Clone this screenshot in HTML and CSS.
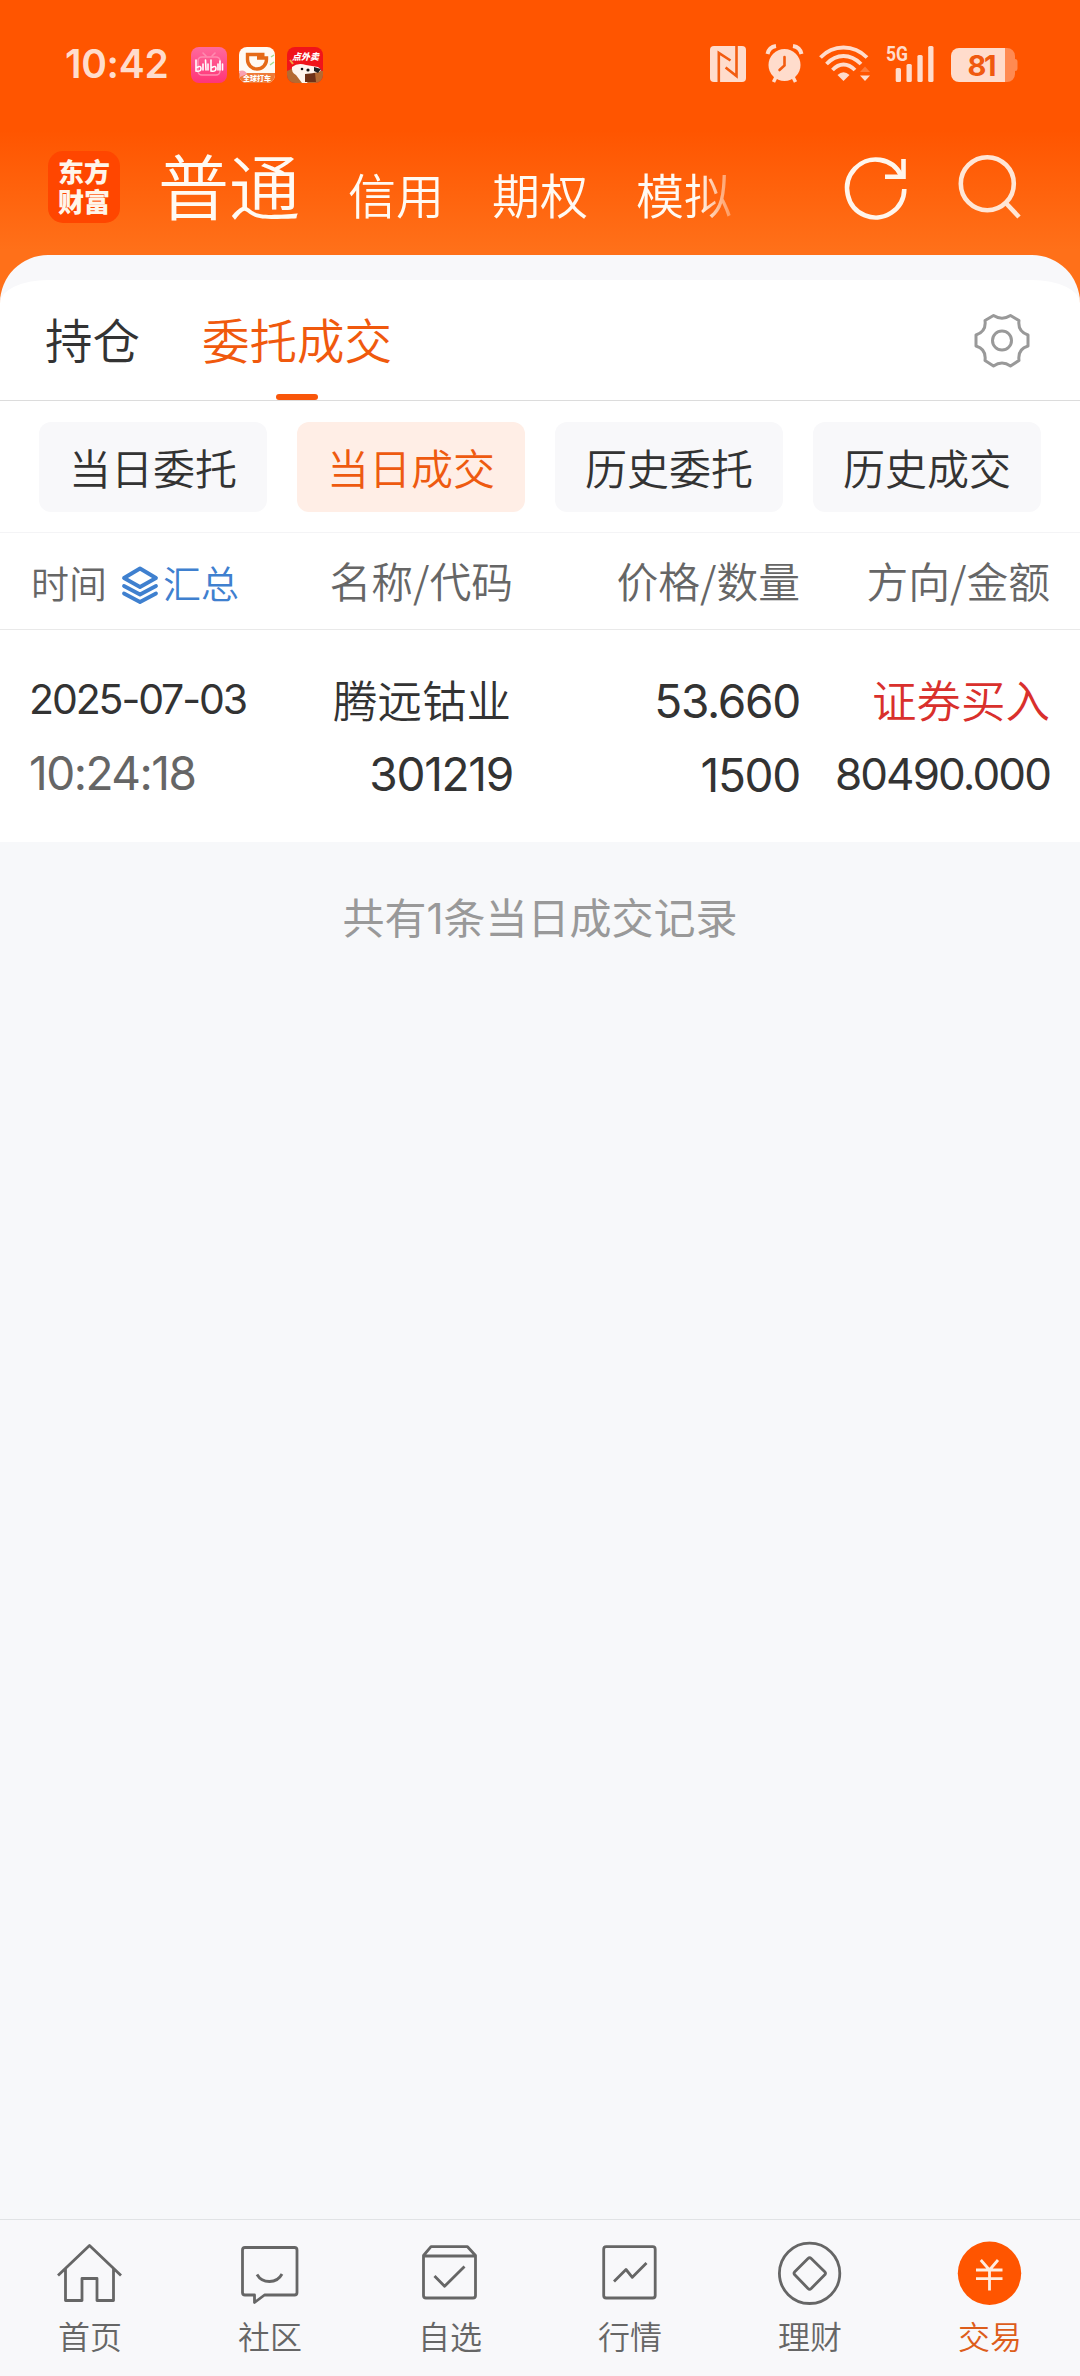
FILE: index.html
```html
<!DOCTYPE html>
<html lang="zh-CN">
<head>
    <meta charset="UTF-8">
    <meta name="viewport" content="width=device-width, initial-scale=1.0">
    <title>委托成交</title>
    <link rel="stylesheet" href="styles.css">
</head>
<body>
    <header class="header">
        <div class="status-bar">
            <span class="clock">10:42</span>
            <div class="app-icons">
                <svg width="36" height="36" viewBox="0 0 36 36">
                    <defs>
                        <linearGradient id="pink" x1="0" y1="0" x2="0" y2="1">
                            <stop offset="0" stop-color="#ff6a9c"/>
                            <stop offset="1" stop-color="#ff3478"/>
                        </linearGradient>
                    </defs>
                    <rect width="36" height="36" rx="8" fill="url(#pink)"/>
                    <g fill="none" stroke="#ff8bb0" stroke-width="1.6" stroke-linecap="round">
                        <rect x="7" y="10" width="22" height="18" rx="4"/>
                        <path d="M12 6l3 3M24 6l-3 3"/>
                    </g>
                    <g fill="none" stroke="#fff" stroke-width="1.6" stroke-linecap="round">
                        <path d="M5 13v11q5 1 5-2.500t-4-1M12 17v6M14.500 13l.5 10M17 17v6M20 13v11q5 1 5-2.500t-4-1M27 17v6M29 14v9M31.500 17v6"/>
                    </g>
                </svg>
                <svg width="36" height="36" viewBox="0 0 36 36">
                    <rect width="36" height="36" rx="8" fill="#fffaf3"/>
                    <path d="M0 26h36v2a8 8 0 0 1-8 8H8a8 8 0 0 1-8-8z" fill="#ee7a38"/>
                    <path d="M0 24q6-2 8 3l-7 3z" fill="#f9a0b0"/>
                    <path d="M31 18l4-3M32 10l3-2" stroke="#a7dc8c" stroke-width="1.500"/>
                    <path d="M25.500 7.500H8.500v5a9.500 9.500 0 0 0 19 0v-1.500H18" fill="none" stroke="#e56a17" stroke-width="3.400"/>
                    <text x="18" y="33.500" class="didi-text">全球打车</text>
                </svg>
                <svg width="36" height="36" viewBox="0 0 36 36">
                    <rect width="36" height="36" rx="8" fill="#f0141a"/>
                    <path d="M0 24l9-4 27 4v4a8 8 0 0 1-8 8H8a8 8 0 0 1-8-8z" fill="#b46a32"/>
                    <path d="M5 20q6-5 14-2l12 2q5 3 1 5l-6 1-6 10h-5l-6-8q-5-3-4-8z" fill="#fff6ef"/>
                    <path d="M27 20l7 2-3 4-4-2z" fill="#222"/>
                    <path d="M18 27l10-1 1 9H18z" fill="#6e3218"/>
                    <circle cx="15" cy="22" r="1.300" fill="#111"/>
                    <circle cx="21" cy="23" r="1.600" fill="#111"/>
                    <path d="M3 13l3 4" stroke="#f5a142" stroke-width="2"/>
                    <text x="18.500" y="13" class="jd-text">点外卖</text>
                </svg>
            </div>
            <div class="status-icons">
                <svg class="nfc" width="36" height="36" viewBox="0 0 36 36">
                    <rect width="36" height="36" rx="4" fill="#ffdccc"/>
                    <path d="M8.800 36V7l11.700 7.500M26.500 0v30L15.600 21.500" fill="none" stroke="#f25c10" stroke-width="2.600"/>
                </svg>
                <svg class="alarm" width="38" height="40" viewBox="0 0 38 40">
                    <circle cx="18.500" cy="21" r="16" fill="#ffdccc"/>
                    <path d="M1.500 10Q3 3 10 2M35.500 10Q34 3 27 2" fill="none" stroke="#ffdccc" stroke-width="4"/>
                    <path d="M10 33l-2.500 5M27 33l2.500 5" stroke="#ffdccc" stroke-width="3.500"/>
                    <path d="M18.500 13v8.500L13.500 26" fill="none" stroke="#f25c10" stroke-width="2.600" stroke-linecap="round"/>
                </svg>
                <svg class="wifi" width="52" height="40" viewBox="0 0 52 40">
                    <g fill="none" stroke="#ffdccc" stroke-width="3.800">
                        <path d="M1.500 13.500Q11 3.500 24.500 3.500T48 13.500"/>
                        <path d="M7.500 20Q15 12 24.500 12T42 20"/>
                        <path d="M13.500 26Q18.500 20.500 24.500 20.500T36 26"/>
                    </g>
                    <path d="M18.500 31q6-5.500 12 0l-6 6z" fill="#ffdccc"/>
                    <path d="M41 28l5-5.500 5 5.500z" fill="#ff7c3a"/>
                    <path d="M41 31.500h10l-5 5.500z" fill="#ffdccc"/>
                </svg>
                <svg class="signal" width="48" height="38" viewBox="0 0 48 38">
                    <text x="0" y="15.500" class="net-text" textLength="22" lengthAdjust="spacingAndGlyphs">5G</text>
                    <g fill="#ffdccc">
                        <rect x="9.700" y="23" width="5.300" height="14" rx="1.500"/>
                        <rect x="20.500" y="19" width="5.300" height="18" rx="1.500"/>
                        <rect x="31.400" y="10" width="5.300" height="27" rx="1.500"/>
                        <rect x="42.200" y="1" width="5.300" height="36" rx="1.500"/>
                    </g>
                </svg>
                <svg class="battery" width="66" height="34" viewBox="0 0 66 34">
                    <path d="M54 0h2a8 8 0 0 1 8 8v3q2.500 0 2.500 2.500v7q0 2.500-2.500 2.500v3a8 8 0 0 1-8 8h-2z" fill="#ff8a52"/>
                    <path d="M8 0h46v34H8a8 8 0 0 1-8-8V8a8 8 0 0 1 8-8z" fill="#ffdccc"/>
                    <text x="31" y="27.500" class="battery-text" textLength="29">81</text>
                </svg>
            </div>
        </div>

        <div class="title-bar">
            <div class="logo"><span>东方</span><span>财富</span></div>
            <nav class="accounts">
                <a class="account current">普通</a>
                <a class="account">信用</a>
                <a class="account">期权</a>
                <a class="account">模拟</a>
            </nav>
            <svg class="refresh" width="66" height="66" viewBox="0 0 66 66">
                <path d="M61.300 34A28.600 29 0 1 1 58.500 21" fill="none" stroke="#fff5ec" stroke-width="4.600"/>
                <path d="M60.500 4v17.700H42" fill="none" stroke="#fff5ec" stroke-width="4.600"/>
            </svg>
            <svg class="search" width="66" height="66" viewBox="0 0 66 66">
                <circle cx="30.300" cy="28.700" r="26.500" fill="none" stroke="#ffe6d6" stroke-width="4.600"/>
                <path d="M48.600 47.700L62 62" stroke="#ffe6d6" stroke-width="4.600"/>
            </svg>
        </div>
    </header>

    <main class="panel">
        <div class="tabs">
            <a class="tab">持仓</a>
            <a class="tab active">委托成交</a>
            <svg class="gear" width="56" height="56" viewBox="0 0 56 56">
                <g fill="none" stroke="#999" stroke-width="3" stroke-linejoin="round">
                    <path d="M19.500 2.500Q28 8 36.500 2.500L45 7.500Q43.500 18.500 54 22V33Q43.500 36 45 47.500L36.500 53Q28 47 19.500 53L11 47.500Q12.500 36 2 33V22Q12.500 18.500 11 7.500Z"/>
                    <circle cx="28" cy="27.500" r="9.500"/>
                </g>
            </svg>
        </div>

        <div class="chips">
            <a class="chip">当日委托</a>
            <a class="chip selected">当日成交</a>
            <a class="chip">历史委托</a>
            <a class="chip">历史成交</a>
        </div>

        <div class="row table-head">
            <div class="time-head">
                <span>时间</span>
                <svg class="layers" width="38" height="38" viewBox="0 0 38 38">
                    <g fill="none" stroke="#3f80cf" stroke-width="3.800" stroke-linejoin="round" stroke-linecap="round">
                        <path d="M19 2.500L35 12 19 21 3 12z"/>
                        <path d="M3 20L19 28.500 35 20"/>
                        <path d="M3 27.500L19 36 35 27.500"/>
                    </g>
                </svg>
                <span class="summary">汇总</span>
            </div>
            <span>名称/代码</span>
            <span>价格/数量</span>
            <span>方向/金额</span>
        </div>

        <div class="row record">
            <div class="cell first">
                <span class="date">2025-07-03</span>
                <span class="time">10:24:18</span>
            </div>
            <div class="cell">
                <span class="name">腾远钴业</span>
                <span class="code">301219</span>
            </div>
            <div class="cell">
                <span class="price">53.660</span>
                <span class="count">1500</span>
            </div>
            <div class="cell">
                <span class="name buy">证券买入</span>
                <span class="amount">80490.000</span>
            </div>
        </div>
    </main>

    <p class="total">共有<span>1</span>条当日成交记录</p>

    <footer class="nav">
        <a class="nav-item">
            <svg width="70" height="70" viewBox="0 0 70 70">
                <path d="M3 35.500L34.500 5.500 66 35.500M10.500 29V60.500H27V38.500H42V60.500H58.500V29"/>
            </svg>
            <span>首页</span>
        </a>
        <a class="nav-item">
            <svg width="70" height="70" viewBox="0 0 70 70">
                <path d="M10 7.500H59.500Q62 7.500 62 10V52.500Q62 55 59.500 55H29.500L19.500 62.500V55H10Q7.500 55 7.500 52.500V10Q7.500 7.500 10 7.500Z"/>
                <path d="M22 34.500Q26 41.500 34.500 41.500T47 34"/>
            </svg>
            <span>社区</span>
        </a>
        <a class="nav-item">
            <svg width="70" height="70" viewBox="0 0 70 70">
                <path d="M8.500 15.500L16 6.700H52.500L60.500 15.500V55.500Q60.500 58 58 58H11Q8.500 58 8.500 55.500ZM8.500 16H60.500"/>
                <path d="M19.500 36L29.600 46.300 49.500 26.500"/>
            </svg>
            <span>自选</span>
        </a>
        <a class="nav-item">
            <svg width="70" height="70" viewBox="0 0 70 70">
                <rect x="8.700" y="6.700" width="51.500" height="51.300" rx="2.500"/>
                <path d="M19 41.500L31 29.500 37.300 37.300 51.500 23"/>
            </svg>
            <span>行情</span>
        </a>
        <a class="nav-item">
            <svg width="70" height="70" viewBox="0 0 70 70">
                <circle cx="34.600" cy="33.300" r="30.200"/>
                <path d="M33 18.500Q34.600 17 36.200 18.500L50 32Q51 33.300 50 34.600L36.200 48.500Q34.600 50 33 48.500L19.500 34.600Q18.500 33.300 19.500 32Z"/>
            </svg>
            <span>理财</span>
        </a>
        <a class="nav-item on">
            <svg width="70" height="70" viewBox="0 0 70 70">
                <circle class="coin" cx="34.500" cy="33.300" r="31.700"/>
                <path class="yen" d="M25.800 20L34.500 30 43 20M21 30H47.500M21 38.700H47.500M34.500 30V50.500"/>
            </svg>
            <span>交易</span>
        </a>
    </footer>
</body>
</html>
```
FILE: styles.css
```css
* {
    box-sizing: border-box;
}

body {
    display: flex;
    flex-direction: column;
    width: 1080px;
    height: 2376px;
    margin: 0;
    overflow: hidden;
    background-color: #f7f8fa;
    color: #333;
    font-family: "Noto Sans CJK SC", sans-serif;
    font-weight: 350;
}

svg {
    display: block;
    flex: none;
    overflow: visible;
}

/* header */
.header {
    height: 305px;
    background: linear-gradient(#ff5500 130px, #ff7019 250px);
}

.status-bar {
    display: flex;
    align-items: center;
    height: 130px;
    padding: 0 63px 0 65px;
}

.clock {
    width: 126px;
    color: #ffdccc;
    font: 600 39px/40px Inter, sans-serif;
    letter-spacing: -0.3px;
    margin-top: -3px;
}

.app-icons {
    display: flex;
    gap: 12px;
}

.didi-text, .jd-text {
    fill: #fff;
    font-size: 7px;
    font-weight: 900;
    text-anchor: middle;
}

.jd-text {
    font-size: 9px;
    font-style: italic;
}

.status-icons {
    display: flex;
    align-items: center;
    margin-left: auto;
    margin-top: -2px;
}

.nfc {
    margin-right: 20px;
}

.alarm, .wifi {
    margin-right: 15px;
}

.signal {
    margin-right: 17px;
}

.net-text {
    fill: #ffdccc;
    font: 700 20px Roboto, sans-serif;
}

.battery {
    margin-top: 2px;
}

.battery-text {
    fill: #f0590f;
    font: 700 29px Inter, sans-serif;
    text-anchor: middle;
}

.title-bar {
    display: flex;
    height: 125px;
    padding: 21px 52px 0 48px;
}

.logo {
    display: flex;
    flex-direction: column;
    align-items: center;
    width: 72px;
    height: 72px;
    padding-top: 5px;
    border-radius: 15px;
    background-color: #ff4600;
    color: #fff5ea;
    font-size: 26px;
    font-weight: 900;
    line-height: 30px;
}

/* the last account fades out at the right edge */
.accounts {
    display: flex;
    align-items: baseline;
    gap: 48px;
    width: 615px;
    height: 93px;
    margin: -3px 0 0 38px;
    color: #fffaf3;
    line-height: 70px;
    white-space: nowrap;
    -webkit-mask-image: linear-gradient(90deg, #000 540px, transparent 590px);
    mask-image: linear-gradient(90deg, #000 540px, transparent 590px);
}

.account {
    font-size: 48px;
}

.account.current {
    font-size: 71px;
}

.refresh {
    margin: 4px 0 0 70px;
}

.search {
    margin: 4px 0 0 48px;
}

/* white panel */
.panel {
    margin-top: -50px;
    border-top: 25px solid #f8f8fa;
    border-radius: 48px 48px 0 0;
    background-color: #fff;
}

.tabs {
    display: flex;
    height: 121px;
    padding: 0 50px 0 45px;
    border-bottom: 1px solid #dcdcdc;
    font-size: 47.5px;
    line-height: 118px;
}

.tab.active {
    position: relative;
    margin-left: 62px;
    color: #f0590d;
}

.tab.active::after {
    content: "";
    position: absolute;
    bottom: 0;
    left: 50%;
    width: 42px;
    height: 6px;
    margin-left: -21px;
    border-radius: 3px;
    background-color: #f9560a;
}

.gear {
    margin: 33px 0 0 auto;
}

.chips {
    display: grid;
    grid-template-columns: repeat(4, 1fr);
    grid-template-rows: 90px;
    gap: 30px;
    height: 132px;
    padding: 21px 39px 20px;
    border-bottom: 1px solid #f4f4f6;
}

.chip {
    border-radius: 12px;
    background-color: #f8f8fa;
    font-size: 42px;
    line-height: 90px;
    text-align: center;
}

.chip.selected {
    background-color: #ffeee6;
    color: #ee5a10;
}

.row {
    display: grid;
    grid-template-columns: 230px 252px 287px 250px;
    padding: 0 30px 0 31px;
    text-align: right;
}

.table-head {
    height: 97px;
    border-bottom: 1px solid #e9e9e9;
    color: #666;
    font-size: 41.8px;
    line-height: 94px;
}

.time-head {
    display: flex;
    font-size: 38px;
    line-height: 98px;
}

.layers {
    margin: 33px 4px 0 14px;
}

.summary {
    color: #3f80cf;
}

.record {
    height: 212px;
    padding-top: 34px;
}

.cell {
    display: flex;
    flex-direction: column;
    font-family: Inter, "Noto Sans CJK SC", sans-serif;
    font-size: 46px;
    font-weight: 400;
    line-height: 73px;
    letter-spacing: -1.3px;
    white-space: nowrap;
}

.cell.first {
    margin-left: -2px;
    text-align: left;
}

.date {
    font-size: 41px;
    line-height: 70px;
    letter-spacing: -2.1px;
}

.time {
    color: #666;
    line-height: 79px;
    letter-spacing: -1.5px;
}

.code, .count, .amount {
    line-height: 75px;
}

.price {
    line-height: 74px;
}

.name {
    margin: -2px 2px 2px 0;
    font-size: 44.5px;
    font-family: "Noto Sans CJK SC", sans-serif;
    font-weight: 350;
    letter-spacing: 0;
}

.name.buy {
    margin-right: 0;
    color: #d9302c;
}

.amount {
    font-size: 44px;
    letter-spacing: -1.9px;
}

.total {
    margin: 41px 0 0;
    color: #999;
    font-size: 42px;
    font-weight: 400;
    line-height: 66px;
    text-align: center;
}

.total span {
    font-family: Inter, sans-serif;
}

/* bottom navigation */
.nav {
    display: grid;
    grid-template-columns: repeat(6, 1fr);
    height: 157px;
    margin-top: auto;
    padding-top: 20px;
    border-top: 1px solid #e1e3e5;
    background-color: #f8f8fa;
}

.nav-item {
    display: flex;
    flex-direction: column;
    align-items: center;
    color: #666;
    font-size: 32px;
    line-height: 50px;
}

.nav-item svg {
    fill: none;
    stroke: #666;
    stroke-width: 2.8;
    stroke-linejoin: round;
}

.nav-item.on {
    color: #dd5d1b;
}

.nav-item .coin {
    fill: #ff5500;
    stroke: none;
}

.nav-item .yen {
    stroke: #ffece0;
}
```
